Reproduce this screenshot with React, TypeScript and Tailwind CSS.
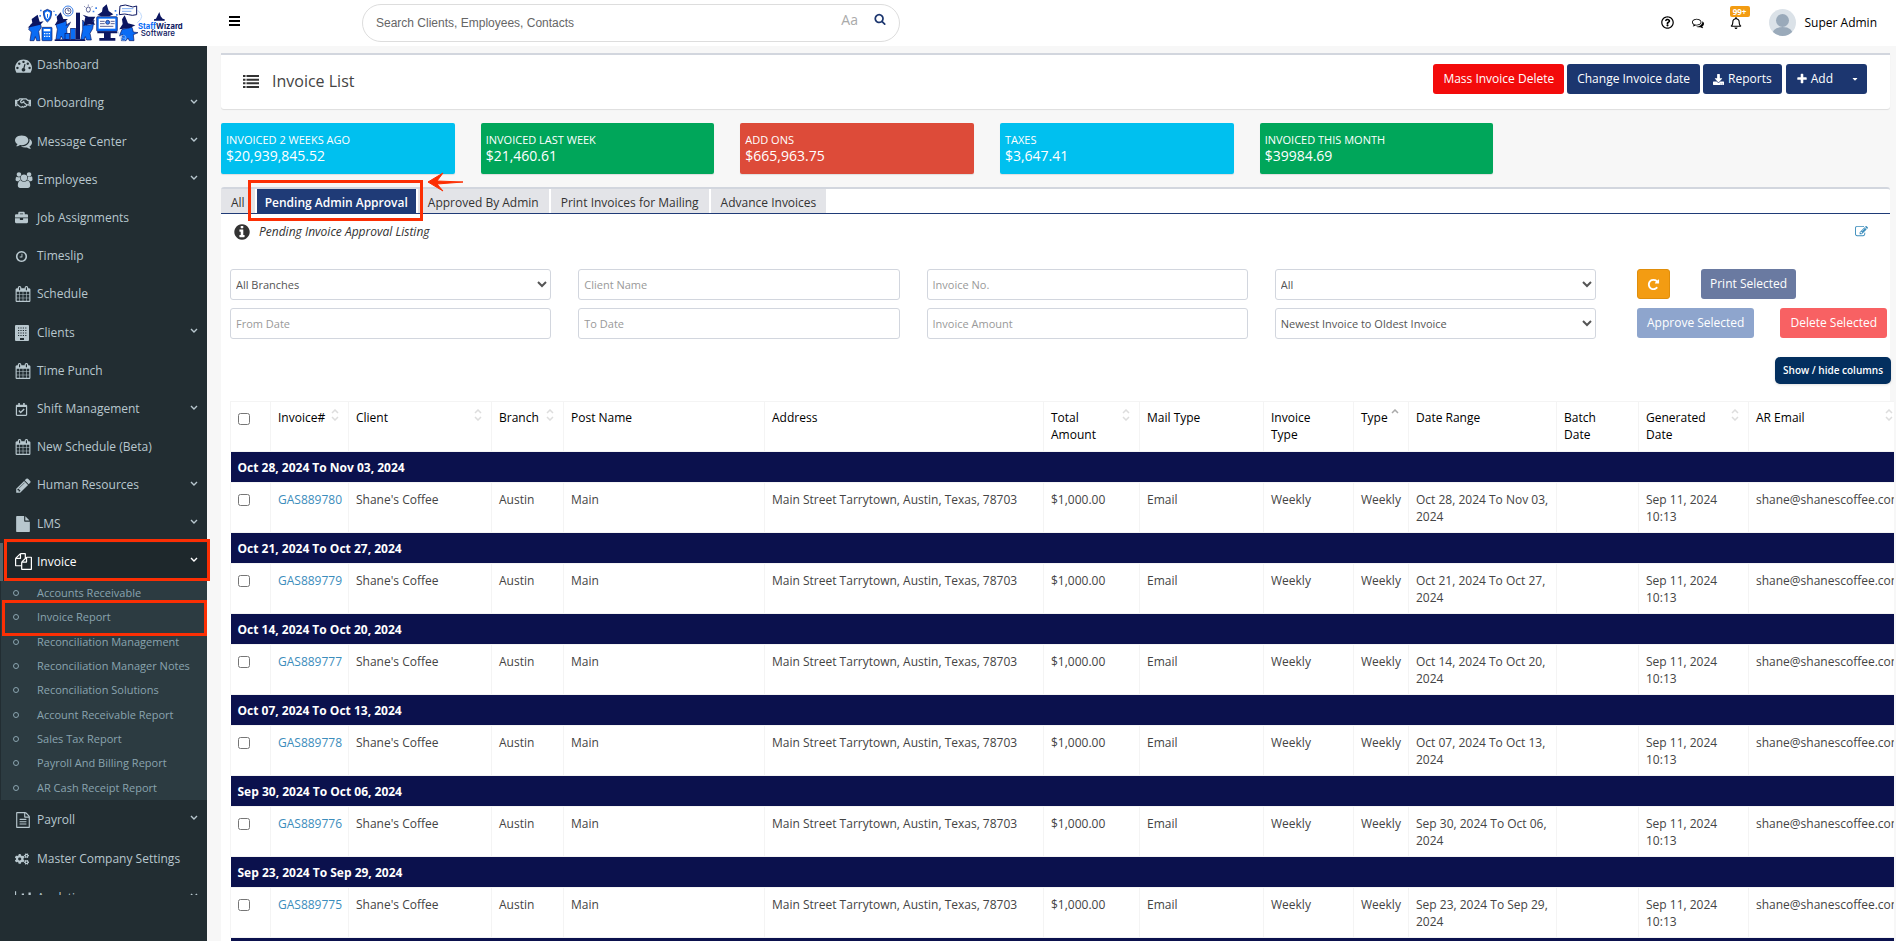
import type { ReactNode } from "react";
import {
  FaBriefcase,
  FaCaretDown,
  FaCogs,
  FaDownload,
  FaRegBell,
  FaRegCalendarCheck,
  FaRegHandshake,
  FaRegQuestionCircle,
} from "react-icons/fa";

const glyphs = {
  dashboard:
    "M384 1152q0-53-37.5-90.5t-90.5-37.5-90.5 37.5-37.5 90.5 37.5 90.5 90.5 37.5 90.5-37.5 37.5-90.5zm192-448q0-53-37.5-90.5t-90.5-37.5-90.5 37.5-37.5 90.5 37.5 90.5 90.5 37.5 90.5-37.5 37.5-90.5zm428 481l101-382q6-26-7.5-48.5t-38.5-29.5-48 6.5-30 39.5l-101 382q-60 5-107 43.5t-63 98.5q-20 77 20 146t117 89 146-20 89-117q16-60-6-117t-72-91zm660-33q0-53-37.5-90.5t-90.5-37.5-90.5 37.5-37.5 90.5 37.5 90.5 90.5 37.5 90.5-37.5 37.5-90.5zm-640-640q0-53-37.5-90.5t-90.5-37.5-90.5 37.5-37.5 90.5 37.5 90.5 90.5 37.5 90.5-37.5 37.5-90.5zm448 192q0-53-37.5-90.5t-90.5-37.5-90.5 37.5-37.5 90.5 37.5 90.5 90.5 37.5 90.5-37.5 37.5-90.5zm320 448q0 261-141 483-19 29-54 29h-1402q-35 0-54-29-141-221-141-483 0-182 71-348t191-286 286-191 348-71 348 71 286 191 191 286 71 348z",
  comments:
    "M1408 768q0 139-94 257t-256.5 186.5-353.5 68.5q-86 0-176-16-124 88-278 128-36 9-86 16h-3q-11 0-20.5-8t-11.5-21q-1-3-1-6.5t.5-6.5 2-6l2.5-5t3.5-5.5 4-5 4.5-5 4-4.5q5-6 23-25t26-29.5 22.5-29 25-38.5 20.5-44q-124-72-195-177t-71-224q0-139 94-257t256.5-186.5 353.5-68.5 353.5 68.5 256.5 186.5 94 257zm384 256q0 120-71 224.5t-195 176.5q10 24 20.5 44t25 38.5 22.5 29 26 29.5 23 25q1 1 4 4.5t4.5 5 4 5 3.5 5.5l2.5 5t2 6 .5 6.5-1 6.5q-3 14-13 22t-22 7q-50-7-86-16-154-40-278-128-90 16-176 16-271 0-472-132 58 4 88 4 161 0 309-45t264-129q125-92 192-212t67-254q0-77-23-152 129 71 204 178t75 230z",
  commentsOutline:
    "M704 384q-153 0-286 52t-211.5 141-78.5 191q0 82 53 158t149 132l97 56-35 84q34-20 62-39l44-31 53 10q78 14 153 14 153 0 286-52t211.5-141 78.5-191-78.5-191-211.5-141-286-52zm0-128q191 0 353.5 68.5t256.5 186.5 94 257-94 257-256.5 186.5-353.5 68.5q-86 0-176-16-124 88-278 128-36 9-86 16h-3q-11 0-20.5-8t-11.5-21q-1-3-1-6.5t.5-6.5 2-6l2.5-5t3.5-5.5 4-5 4.5-5 4-4.5q5-6 23-25t26-29.5 22.5-29 25-38.5 20.5-44q-124-72-195-177t-71-224q0-139 94-257t256.5-186.5 353.5-68.5zm822 1169q10 24 20.5 44t25 38.5 22.5 29 26 29.5 23 25q1 1 4 4.5t4.5 5 4 5 3.5 5.5l2.5 5t2 6 .5 6.5-1 6.5q-3 14-13 22t-22 7q-50-7-86-16-154-40-278-128-90 16-176 16-271 0-472-132 58 4 88 4 161 0 309-45t264-129q125-92 192-212t67-254q0-77-23-152 129 71 204 178t75 230q0 120-71 224.5t-195 176.5z",
  users:
    "M657 896q-162 5-265 128h-134q-82 0-138-40.5t-56-118.5q0-353 124-353 6 0 43.5 21t97.5 42.5 119 21.5q67 0 133-23-5 37-5 66 0 159 90 294zm1071 637q0 120-73 189.5t-194 69.5h-874q-121 0-194-69.5t-73-189.5q0-53 3.5-103.5t14-109 26.5-108.5 43-97.5 62-81 85.5-53.5 111.500-20q10 0 43 21.5t73 48 107 48 135 21.5 135-21.5 107-48 73-48 43-21.5q61 0 111.500 20t85.5 53.5 62 81 43 97.5 26.5 108.5 14 109 3.5 103.5zm-1024-1277q0 106-75 181t-181 75-181-75-75-181 75-181 181-75 181 75 75 181zm704 384q0 159-112.5 271.5t-271.5 112.5-271.5-112.5-112.5-271.5 112.5-271.5 271.5-112.5 271.5 112.5 112.5 271.5zm576 225q0 78-56 118.500t-138 40.5h-134q-103-123-265-128 90-135 90-294 0-29-5-66 66 23 133 23 59 0 119-21.5t97.5-42.5 43.5-21q124 0 124 353zm-128-609q0 106-75 181t-181 75-181-75-75-181 75-181 181-75 181 75 75 181z",
  clock:
    "M1024 544v448q0 14-9 23t-23 9h-320q-14 0-23-9t-9-23v-64q0-14 9-23t23-9h224v-352q0-14 9-23t23-9h64q14 0 23 9t9 23zm416 352q0-148-73-273t-198-198-273-73-273 73-198 198-73 273 73 273 198 198 273 73 273-73 198-198 73-273zm224 0q0 209-103 385.5t-279.5 279.5-385.5 103-385.5-103-279.5-279.5-103-385.5 103-385.5 279.5-279.5 385.5-103 385.5 103 279.5 279.5 103 385.5z",
  calendar:
    "M192 1664h288v-288h-288v288zm352 0h320v-288h-320v288zm-352-352h288v-320h-288v320zm352 0h320v-320h-320v320zm-352-384h288v-288h-288v288zm736 736h320v-288h-320v288zm-384-736h320v-288h-320v288zm768 736h288v-288h-288v288zm-384-352h320v-320h-320v320zm-352-864v-288q0-13-9.5-22.5t-22.5-9.5h-64q-13 0-22.5 9.5t-9.5 22.5v288q0 13 9.5 22.5t22.5 9.5h64q13 0 22.5-9.5t9.5-22.5zm736 864h288v-320h-288v320zm-384-384h320v-288h-320v288zm384 0h288v-288h-288v288zm32-480v-288q0-13-9.5-22.5t-22.5-9.5h-64q-13 0-22.5 9.5t-9.5 22.5v288q0 13 9.5 22.5t22.5 9.5h64q13 0 22.5-9.5t9.5-22.5zm384-64v1280q0 52-38 90t-90 38h-1408q-52 0-90-38t-38-90v-1280q0-52 38-90t90-38h128v-96q0-66 47-113t113-47h64q66 0 113 47t47 113v96h384v-96q0-66 47-113t113-47h64q66 0 113 47t47 113v96h128q52 0 90 38t38 90z",
  pencil:
    "M491 1536l91-91-235-235-91 91v107h128v128h107zm523-928q0-22-22-22-10 0-17 7l-542 542q-7 7-7 17 0 22 22 22 10 0 17-7l542-542q7-7 7-17zm-54-192l416 416-832 832h-416v-416zm683 96q0 53-37 90l-166 166-416-416 166-165q36-38 90-38 53 0 91 38l235 234q37 39 37 91z",
  file: "M1152 512v-472q22 14 36 28l408 408q14 14 28 36h-472zm-128 32q0 40 28 68t68 28h544v1056q0 40-28 68t-68 28h-1344q-40 0-68-28t-28-68v-1600q0-40 28-68t68-28h800v544z",
  files:
    "M1696 384q40 0 68 28t28 68v1216q0 40-28 68t-68 28h-960q-40 0-68-28t-28-68v-288h-544q-40 0-68-28t-28-68v-672q0-40 20-88t48-76l408-408q28-28 76-48t88-20h416q40 0 68 28t28 68v328q68-40 128-40h416zm-544 213l-299 299h299v-299zm-640-384l-299 299h299v-299zm196 647l316-316v-416h-384v416q0 40-28 68t-68 28h-416v640h512v-256q0-40 20-88t48-76zm956 804v-1152h-384v416q0 40-28 68t-68 28h-416v640h896z",
  fileText:
    "M1596 380q28 28 48 76t20 88v1152q0 40-28 68t-68 28h-1344q-40 0-68-28t-28-68v-1600q0-40 28-68t68-28h896q40 0 88 20t76 48zm-444-244v376h376q-10-29-22-41l-313-313q-12-12-41-22zm384 1528v-1024h-416q-40 0-68-28t-28-68v-416h-768v1536h1280zm-1024-864q0-14 9-23t23-9h704q14 0 23 9t9 23v64q0 14-9 23t-23 9h-704q-14 0-23-9t-9-23v-64zm736 224q14 0 23 9t9 23v64q0 14-9 23t-23 9h-704q-14 0-23-9t-9-23v-64q0-14 9-23t23-9h704zm0 256q14 0 23 9t9 23v64q0 14-9 23t-23 9h-704q-14 0-23-9t-9-23v-64q0-14 9-23t23-9h704z",
  chart:
    "M640 896v512h-256v-512h256zm384-512v1024h-256v-1024h256zm1024 1152v128h-2048v-1536h128v1408h1920zm-640-896v768h-256v-768h256zm384-384v1152h-256v-1152h256z",
  search:
    "M1216 832q0-185-131.5-316.5t-316.5-131.5-316.5 131.5-131.5 316.5 131.5 316.5 316.5 131.5 316.5-131.5 131.5-316.5zm512 832q0 52-38 90t-90 38q-54 0-90-38l-343-342q-179 124-399 124-143 0-273.5-55.5t-225-150-150-225-55.5-273.5 55.5-273.5 150-225 225-150 273.5-55.5 273.5 55.5 225 150 150 225 55.5 273.5q0 220-124 399l343 343q37 37 37 90z",
  info: "M1152 1376v-160q0-14-9-23t-23-9h-96v-512q0-14-9-23t-23-9h-320q-14 0-23 9t-9 23v160q0 14 9 23t23 9h96v320h-96q-14 0-23 9t-9 23v160q0 14 9 23t23 9h448q14 0 23-9t9-23zm-128-896v-160q0-14-9-23t-23-9h-192q-14 0-23 9t-9 23v160q0 14 9 23t23 9h192q14 0 23-9t9-23zm640 416q0 209-103 385.5t-279.5 279.5-385.5 103-385.5-103-279.5-279.5-103-385.5 103-385.5 279.5-279.5 385.5-103 385.5 103 279.5 279.5 103 385.5z",
  edit: "M888 1184l116-116-152-152-116 116v56h96v96h56zm440-720q-16-16-33 1l-350 350q-17 17-1 33t33-1l350-350q17-17 1-33zm80 594v190q0 119-84.5 203.5t-203.5 84.5h-832q-119 0-203.5-84.5t-84.5-203.5v-832q0-119 84.5-203.5t203.5-84.5h832q63 0 117 25 15 7 18 23 3 17-9 29l-49 49q-14 14-32 8-23-6-45-6h-832q-66 0-113 47t-47 113v832q0 66 47 113t113 47h832q66 0 113-47t47-113v-126q0-13 9-22l64-64q15-15 35-7t20 29zm-96-738l288 288-672 672h-288v-288zm444 132l-92 92-288-288 92-92q28-28 68-28t68 28l152 152q28 28 28 68t-28 68z",
  reload:
    "M1664 256v448q0 26-19 45t-45 19h-448q-42 0-59-40-17-39 14-69l138-138q-148-137-349-137-104 0-198.5 40.5t-163.5 109.5-109.5 163.5-40.5 198.5 40.5 198.5 109.5 163.5 163.5 109.5 198.5 40.5q119 0 225-52t179-147q7-10 23-12 15 0 25 9l137 138q9 8 9.5 20.5t-7.5 22.5q-109 132-264 204.5t-327 72.5q-156 0-298-61t-245-164-164-245-61-298 61-298 164-245 245-164 298-61q147 0 284.5 55.5t244.5 156.5l130-129q29-31 70-14 39 17 39 59z",
  plus: "M1600 736v192q0 40-28 68t-68 28h-416v416q0 40-28 68t-68 28h-192q-40 0-68-28t-28-68v-416h-416q-40 0-68-28t-28-68v-192q0-40 28-68t68-28h416v-416q0-40 28-68t68-28h192q40 0 68 28t28 68v416h416q40 0 68 28t28 68z",
};

type GlyphProps = { name: keyof typeof glyphs; size?: number; wide?: boolean };

// wide glyphs are drawn on a 2048 unit grid instead of 1792
function Glyph({ name, size = 16, wide }: GlyphProps) {
  return (
    <svg
      viewBox={wide ? "0 0 2048 1792" : "0 0 1792 1792"}
      width={size}
      height={wide ? size - 2 : size}
      fill="currentColor"
      aria-hidden="true"
    >
      <path d={glyphs[name]} />
    </svg>
  );
}

function BuildingIcon() {
  return (
    <svg viewBox="0 0 14 16" width={14} height={16} aria-hidden="true">
      <rect width="14" height="16" rx="1" fill="currentColor" />
      <path d="M3 3h9M3 5.500h9M3 8h9M3 10.500h9" stroke="#222d32" strokeWidth="1.200" strokeDasharray="1.200 1.200" />
      <rect x="5" y="13" width="4" height="2" fill="#222d32" />
    </svg>
  );
}

type NavItem = { label: string; icon: ReactNode; expandable?: boolean; active?: boolean };

const mainNav: NavItem[] = [
  { label: "Dashboard", icon: <Glyph name="dashboard" size={17} /> },
  { label: "Onboarding", icon: <FaRegHandshake size={16} />, expandable: true },
  { label: "Message Center", icon: <Glyph name="comments" size={17} />, expandable: true },
  { label: "Employees", icon: <Glyph name="users" size={18} wide />, expandable: true },
  { label: "Job Assignments", icon: <FaBriefcase size={13} /> },
  { label: "Timeslip", icon: <Glyph name="clock" size={13} /> },
  { label: "Schedule", icon: <Glyph name="calendar" size={16} /> },
  { label: "Clients", icon: <BuildingIcon />, expandable: true },
  { label: "Time Punch", icon: <Glyph name="calendar" size={16} /> },
  { label: "Shift Management", icon: <FaRegCalendarCheck size={13} />, expandable: true },
  { label: "New Schedule (Beta)", icon: <Glyph name="calendar" size={16} /> },
  { label: "Human Resources", icon: <Glyph name="pencil" size={17} />, expandable: true },
  { label: "LMS", icon: <Glyph name="file" size={16} />, expandable: true },
  { label: "Invoice", icon: <Glyph name="files" size={17} />, expandable: true, active: true },
];

const invoiceNav = [
  "Accounts Receivable",
  "Invoice Report",
  "Reconciliation Management",
  "Reconciliation Manager Notes",
  "Reconciliation Solutions",
  "Account Receivable Report",
  "Sales Tax Report",
  "Payroll And Billing Report",
  "AR Cash Receipt Report",
];

const lowerNav: NavItem[] = [
  { label: "Payroll", icon: <Glyph name="fileText" size={16} />, expandable: true },
  { label: "Master Company Settings", icon: <FaCogs size={14} /> },
  { label: "Analytics", icon: <Glyph name="chart" size={18} wide />, expandable: true },
];

const stats = [
  { label: "INVOICED 2 WEEKS AGO", value: "$20,939,845.52", color: "bg-[#00c0ef]" },
  { label: "INVOICED LAST WEEK", value: "$21,460.61", color: "bg-[#00a65a]" },
  { label: "ADD ONS", value: "$665,963.75", color: "bg-[#dd4b39]" },
  { label: "TAXES", value: "$3,647.41", color: "bg-[#00c0ef]" },
  { label: "INVOICED THIS MONTH", value: "$39984.69", color: "bg-[#00a65a]" },
];

const tabs = ["All", "Pending Admin Approval", "Approved By Admin", "Print Invoices for Mailing", "Advance Invoices"];

const columns = [
  { label: "Invoice#", width: "w-[78px]", sort: true },
  { label: "Client", width: "w-[143px]", sort: true },
  { label: "Branch", width: "w-[72px]", sort: true },
  { label: "Post Name", width: "w-[201px]" },
  { label: "Address", width: "w-[279px]" },
  { label: "Total Amount", width: "w-[96px]", sort: true, wrap: true },
  { label: "Mail Type", width: "w-[124px]" },
  { label: "Invoice Type", width: "w-[90px]", wrap: true },
  { label: "Type", width: "w-[55px]", sort: true, sorted: true },
  { label: "Date Range", width: "w-[148px]" },
  { label: "Batch Date", width: "w-[82px]", wrap: true },
  { label: "Generated Date", width: "w-[110px]", sort: true, wrap: true },
  { label: "AR Email", width: "w-[154px]", sort: true },
];

const invoices = [
  { id: "GAS889780", range: "Oct 28, 2024 To Nov 03, 2024" },
  { id: "GAS889779", range: "Oct 21, 2024 To Oct 27, 2024" },
  { id: "GAS889777", range: "Oct 14, 2024 To Oct 20, 2024" },
  { id: "GAS889778", range: "Oct 07, 2024 To Oct 13, 2024" },
  { id: "GAS889776", range: "Sep 30, 2024 To Oct 06, 2024" },
  { id: "GAS889775", range: "Sep 23, 2024 To Sep 29, 2024" },
  { id: "GAS889774", range: "Sep 16, 2024 To Sep 22, 2024" },
];

function Logo() {
  return (
    <svg viewBox="0 0 510 138" className="h-[46px] w-[170px]" role="img" aria-label="StaffWizard Software">
      <g fill="#0a6cf5" stroke="#0b1560" strokeWidth="2">
        <path d="M34 72l26-6 4 16-8 12 4 28H50l-4-12-4 12H30l4-26-8-8z" />
        <path d="M112 68l26-6 2 14 10-6-10 16 2 32h-14l-4-10-4 10h-12l4-30-4-14z" />
        <path d="M188 60l10 16 16-2 8-14-4 26-8 14 4 20h-14l-4-10-4 10h-10l6-32z" />
        <path d="M306 88l30-6 4 14 14 2-14 6 2 18h-14l-4-8-6 8h-14l4-18-10 4z" />
        <path d="M70 34l12-6 13 6q0 24-13 32-12-8-12-32z" />
        <rect x="66" y="82" width="30" height="40" rx="2" />
        <rect x="135" y="100" width="14" height="18" />
        <rect x="152" y="85" width="14" height="33" />
        <rect x="230" y="50" width="62" height="44" rx="3" />
      </g>
      <g fill="#fff">
        <path d="M75 38l7-4 8 4q0 14-8 20-7-6-7-20z" />
        <rect x="71" y="87" width="20" height="7" />
        <path d="M72 99h4v4h-4zm7 0h4v4h-4zm7 0h4v4h-4zm-14 8h4v4h-4zm7 0h4v4h-4zm7 0h4v4h-4z" />
        <rect x="236" y="56" width="50" height="30" />
      </g>
      <path d="M81 42h3v11h-3z" fill="#0a6cf5" />
      <g fill="#0b1560">
        <path d="M53 44l6 22 12-2-10 10-38 9 14-14-2-12z" />
        <path d="M122 37l8 20 14 0-12 10-28 9 8-14-2-12z" />
        <path d="M190 78l6-26-8-8 18 6 20 0-8 14 8 10-16-2z" />
        <path d="M260 13l6 20 14 10-12 6h-24l-12-4 14-10 2-12z" />
        <path d="M314 46l10 24 22 6-16 8-32 4 10-16-2-14z" />
        <path d="M168 38h12v80h-12z" />
        <path d="M104 118h92v5h-92z" />
        <path d="M232 94h60v6h-60zM252 100h20v14h-20zM238 114h48v8h-48z" />
        <path d="M418 36l4 13 6 7 6 2v4h-32v-4l6-2 4-8z" />
      </g>
      <g fill="none" stroke="#0b1560" strokeWidth="2">
        <circle cx="144" cy="33" r="15" stroke="#3d82ea" strokeWidth="3" />
        <circle cx="144" cy="33" r="9" />
        <path d="M144 27v6h5M137 76l16-10" />
        <path d="M300 18q18-6 28 0t22 0v26q-14 4-24 0t-28 0z" strokeWidth="3" />
        <path d="M306 26h34M306 34h28" stroke="#3d82ea" />
        <path d="M199 28q0-7 6-7t6 7q0 4-3 8h-6q-3-4-3-8zM205 14v3M193 19l3 3M217 19l-3 3" />
        <path d="M240 64h14M240 71h14M240 79h40M272 64h12M272 71h12" />
        <circle cx="263" cy="67" r="6" fill="#3d82ea" />
        <path d="M352 30q26 20 0 38M294 94q8 26 24 20" stroke="#9cc3f8" />
        <circle cx="310" cy="114" r="8" stroke="#9cc3f8" />
      </g>
      <path
        d="M60 29h5v5h-5zM58 45h5v5h-5zM105 42h5v5h-5zM100 32h4v4h-4zM218 32h5v5h-5zM226 22h5v5h-5zM284 30h5v5h-5zM288 42h5v5h-5z"
        fill="#3d82ea"
      />
      <g fontFamily="Inter, 'Open Sans', sans-serif" fontWeight="700">
        <text x="354" y="88" fontSize="23" fill="#0b1560">
          <tspan fill="#0a6cf5">Staff</tspan>Wizard
        </text>
        <text x="362" y="108" fontSize="24" fontWeight="500" fill="#0b1560">
          Software
        </text>
      </g>
    </svg>
  );
}

function AngleDown() {
  return (
    <svg viewBox="0 0 8 5" className="mb-1 h-[5px] w-2" fill="none" stroke="currentColor" strokeWidth="1.400" aria-hidden="true">
      <path d="M1 1l3 3 3-3" />
    </svg>
  );
}

function NavLink({ item }: { item: NavItem }) {
  return (
    <li className={item.active ? "border-l-3 border-[#59656a] bg-[#1e282c] text-white" : "border-l-3 border-transparent"}>
      <a href="#" className="flex h-full items-center pr-[9px] pl-3">
        <span className="flex w-[22px] items-center">{item.icon}</span>
        <span className="flex-1">{item.label}</span>
        {item.expandable && <AngleDown />}
      </a>
    </li>
  );
}

function Sidebar() {
  return (
    <aside className="relative w-[207px] shrink-0 bg-[#222d32] text-[12px] text-[#b8c7ce]">
      <nav className="h-[849px] overflow-hidden">
        <ul className="grid h-[535px] auto-rows-fr">
          {mainNav.map((item) => (
            <NavLink key={item.label} item={item} />
          ))}
        </ul>
        <ul className="ml-px grid h-[219px] auto-rows-fr bg-[#2c3b41] text-[11px] text-[#8aa4af]">
          {invoiceNav.map((label) => (
            <li key={label}>
              <a href="#" className="flex h-full items-center pl-3">
                <span className="mr-[18px] size-[6px] rounded-full border border-current" />
                {label}
              </a>
            </li>
          ))}
        </ul>
        <ul className="grid h-[117px] auto-rows-fr">
          {lowerNav.map((item) => (
            <NavLink key={item.label} item={item} />
          ))}
        </ul>
      </nav>
      {/* walkthrough highlights */}
      <div className="absolute top-[493px] left-1 h-[42px] w-[206px] border-3 border-[#fc2f04]" />
      <div className="absolute top-[554px] left-[2px] h-9 w-[205px] border-3 border-[#fc2f04]" />
    </aside>
  );
}

function TopBar() {
  return (
    <header className="flex h-[46px] items-center bg-white">
      <a href="#" className="flex w-[207px] justify-center pl-[3px]">
        <Logo />
      </a>
      <button type="button" aria-label="Toggle navigation" className="-mt-1 ml-[22px] flex w-[11px] flex-col gap-[2px]">
        <span className="h-[2px] bg-black" />
        <span className="h-[2px] bg-black" />
        <span className="h-[2px] bg-black" />
      </button>
      <form className="ml-[122px] flex h-[38px] w-[538px] items-center rounded-full border border-[#ddd] px-[13px]">
        <input
          type="search"
          aria-label="Search"
          placeholder="Search Clients, Employees, Contacts"
          className="min-w-0 flex-1 font-['Liberation_Sans',Arial,sans-serif] text-[12px] text-[#555] outline-none placeholder:text-[#666]"
        />
        <span className="mr-4 mb-2 text-[14px] text-[#aaa]">Aa</span>
        <button type="button" aria-label="Run search" className="mb-2 text-[#1c366f]">
          <Glyph name="search" size={12} />
        </button>
      </form>
      <div className="ml-auto flex items-center pr-[19px]">
        <button type="button" aria-label="Help" className="mr-[18px] mb-[2px]">
          <FaRegQuestionCircle size={13} />
        </button>
        <button type="button" aria-label="Messages" className="mr-[26px]">
          <Glyph name="commentsOutline" size={12} />
        </button>
        <button type="button" aria-label="Notifications" className="relative mr-[27px]">
          <FaRegBell size={12} />
          <span className="absolute -top-[11px] left-0 flex h-[11px] w-5 items-center justify-center rounded-[2px] bg-[#f39c12] text-[8px] font-bold text-white">
            99+
          </span>
        </button>
        <svg viewBox="0 0 27 27" className="mr-[9px] mb-[2px] size-[27px]" role="img" aria-label="Avatar">
          <clipPath id="avatar">
            <circle cx="13.5" cy="13.5" r="13.5" />
          </clipPath>
          <g clipPath="url(#avatar)">
            <rect width="27" height="27" fill="#dbe2e8" />
            <circle cx="13.5" cy="11.5" r="6.5" fill="#9aaaba" />
            <path d="M3 27q0-9 10.500-9t10.500 9z" fill="#9aaaba" />
          </g>
        </svg>
        <span className="text-[12px] text-black">Super Admin</span>
      </div>
    </header>
  );
}

function TitleBox() {
  return (
    <section className="flex items-start justify-between rounded-b-[3px] border-t-2 border-[#d2d6de] bg-white pt-[9px] pr-[23px] pb-[15px] pl-[22px] shadow-[0_1px_1px_rgba(0,0,0,0.1)]">
      <h1 className="mt-[5px] flex items-center gap-[13px] text-[16px] text-[#444]">
        <svg viewBox="0 0 16 13" className="h-[13px] w-4" fill="#333" aria-hidden="true">
          <path d="M0 0h2.500v2H0zM0 3.700h2.500v2H0zM0 7.300h2.500v2H0zM0 11h2.500v2H0zM3.500 0H16v2H3.500zM3.500 3.700H16v2H3.500zM3.500 7.300H16v2H3.500zM3.500 11H16v2H3.500z" />
        </svg>
        Invoice List
      </h1>
      <div className="flex gap-[3px] text-[12px] text-white">
        <button type="button" className="h-[30px] rounded-[3px] bg-[#f30b0b] px-[10px]">
          Mass Invoice Delete
        </button>
        <button type="button" className="h-[30px] rounded-[3px] bg-[#1c366f] px-[10px]">
          Change Invoice date
        </button>
        <button type="button" className="flex h-[30px] items-center gap-1 rounded-[3px] bg-[#1c366f] px-[10px]">
          <FaDownload size={11} />
          Reports
        </button>
        <div className="ml-px flex h-[30px] rounded-[3px] bg-[#1c366f]">
          <button type="button" className="flex items-center gap-[3px] px-[10px]">
            <Glyph name="plus" size={12} />
            Add
          </button>
          <button type="button" aria-label="More add options" className="px-2">
            <FaCaretDown size={8} />
          </button>
        </div>
      </div>
    </section>
  );
}

function TabBar() {
  return (
    <div role="tablist" className="relative flex h-[25px] gap-[2px] border-b border-[#1f3b77] text-[12px] text-[#333]">
      {tabs.map((tab) => {
        const active = tab === "Pending Admin Approval";
        return (
          <button
            key={tab}
            type="button"
            role="tab"
            aria-selected={active}
            className={
              active ? "bg-[#1f3b77] px-2 pt-[3px] font-semibold text-white" : "bg-[#e3e4e8] px-[10px] pt-[3px]"
            }
          >
            {tab}
          </button>
        );
      })}
      {/* walkthrough highlight and pointer over the active tab */}
      <div className="absolute -top-[9px] left-[27px] h-[41px] w-[175px] border-3 border-[#fc2f04]" />
      <svg viewBox="0 0 36 20" className="absolute -top-[17px] left-[206px] h-5 w-9" aria-hidden="true">
        <path d="M1 10L16 1l-6 8 26 1-26 2 6 7z" fill="#fc2f04" stroke="#fc2f04" />
      </svg>
    </div>
  );
}

const fieldClass = "h-[31px] w-full min-w-0 rounded-[3px] border border-[#d2d6de] bg-white text-[#555]";

function Filters() {
  return (
    <form className="flex pl-[9px] text-[11px]">
      <div className="grid flex-1 grid-cols-4 gap-x-[27px] gap-y-2">
        <select aria-label="Branch" className={`${fieldClass} px-px`}>
          <option>All Branches</option>
        </select>
        <input aria-label="Client name" placeholder="Client Name" className={`${fieldClass} px-[5px] placeholder:text-[#999]`} />
        <input aria-label="Invoice number" placeholder="Invoice No." className={`${fieldClass} px-[5px] placeholder:text-[#999]`} />
        <select aria-label="Status" className={`${fieldClass} px-px`}>
          <option>All</option>
        </select>
        <input aria-label="From date" placeholder="From Date" className={`${fieldClass} px-[5px] placeholder:text-[#999]`} />
        <input aria-label="To date" placeholder="To Date" className={`${fieldClass} px-[5px] placeholder:text-[#999]`} />
        <input aria-label="Invoice amount" placeholder="Invoice Amount" className={`${fieldClass} px-[5px] placeholder:text-[#999]`} />
        <select aria-label="Sort order" className={`${fieldClass} px-px`}>
          <option>Newest Invoice to Oldest Invoice</option>
        </select>
      </div>
      <div className="ml-[41px] flex w-[253px] flex-col gap-[9px] text-[12px] text-white">
        <div className="flex gap-[31px]">
          <button
            type="button"
            aria-label="Reset filters"
            className="flex h-[30px] w-[33px] items-center justify-center rounded-[3px] border border-[#e08e0b] bg-[#f39c12]"
          >
            <Glyph name="reload" size={13} />
          </button>
          <button type="button" className="h-[30px] rounded-[3px] bg-[#6a7aa1] px-[9px]">
            Print Selected
          </button>
        </div>
        <div className="flex justify-between pr-[3px]">
          <button type="button" className="h-[30px] rounded-[3px] bg-[#8ea5cd] px-[10px]">
            Approve Selected
          </button>
          <button type="button" className="h-[30px] rounded-[3px] bg-[#f86163] px-[10px]">
            Delete Selected
          </button>
        </div>
      </div>
    </form>
  );
}

function SortIcon({ sorted }: { sorted?: boolean }) {
  return (
    <svg viewBox="0 0 8 12" className="absolute top-[7px] right-[9px] h-3 w-2" fill="none" stroke="#ddd" strokeWidth="1.500" aria-hidden="true">
      <path d="M1 4l3-3 3 3" stroke={sorted ? "#aaa" : "#ddd"} />
      {!sorted && <path d="M1 8l3 3 3-3" />}
    </svg>
  );
}

function InvoiceTable() {
  return (
    <div className="-mr-1 ml-[9px] overflow-hidden">
      <table className="w-[1672px] min-w-full table-fixed border-collapse bg-white text-left text-[12px] leading-[17px] text-[#444]">
        <thead className="text-black">
          <tr className="h-[50px] align-top">
            <th className="w-10 border border-[#f4f4f4] px-[7px] pt-[11px]">
              <input type="checkbox" aria-label="Select all invoices" className="block size-3" />
            </th>
            {columns.map((column) => (
              <th key={column.label} className={`${column.width} relative border border-[#f4f4f4] px-[7px] pt-[7px] font-normal`}>
                <span className={column.wrap ? "block w-min" : ""}>{column.label}</span>
                {column.sort && <SortIcon sorted={column.sorted} />}
              </th>
            ))}
          </tr>
        </thead>
        {invoices.map((invoice) => (
          <tbody key={invoice.id}>
            <tr className="h-[31px] bg-[#0b114d] text-white">
              <th colSpan={14} scope="rowgroup" className="px-[7px] font-bold">
                {invoice.range}
              </th>
            </tr>
            <tr className="h-[50px] align-top [&>td]:border [&>td]:border-[#f4f4f4] [&>td]:pt-2 [&>td]:pb-[6px] [&>td]:pl-[7px]">
              <td>
                <input type="checkbox" aria-label={`Select ${invoice.id}`} className="mt-[3px] block size-3" />
              </td>
              <td>
                <a href="#" className="text-[#3c8dbc]">
                  {invoice.id}
                </a>
              </td>
              <td>Shane's Coffee</td>
              <td>Austin</td>
              <td>Main</td>
              <td>Main Street Tarrytown, Austin, Texas, 78703</td>
              <td>$1,000.00</td>
              <td>Email</td>
              <td>Weekly</td>
              <td>Weekly</td>
              <td>{invoice.range}</td>
              <td />
              <td>
                Sep 11, 2024
                <br />
                10:13
              </td>
              <td>shane@shanescoffee.com</td>
            </tr>
          </tbody>
        ))}
      </table>
    </div>
  );
}

export default function App() {
  return (
    <div className="flex h-screen flex-col overflow-hidden bg-[#f7f7f7] font-['Open_Sans',sans-serif]">
      <TopBar />
      <div className="flex min-h-0 flex-1">
        <Sidebar />
        <main className="flex min-w-0 flex-1 flex-col pt-[7px] pr-[6px] pl-[14px]">
          <TitleBox />
          <section className="mt-[14px] flex gap-[26px] text-white">
            {stats.map((stat) => (
              <div key={stat.label} className={`${stat.color} h-[51px] w-[14%] rounded-[2px] px-[5px] pt-2 shadow-[0_1px_1px_rgba(0,0,0,0.1)]`}>
                <p className="text-[11px] leading-[17px]">{stat.label}</p>
                <p className="text-[14px] leading-[15px]">{stat.value}</p>
              </div>
            ))}
          </section>
          <section className="mt-[13px] flex-1 rounded-t-[3px] border-t-2 border-[#d2d6de] bg-white">
            <TabBar />
            <div className="flex h-[35px] items-center pr-[22px] pl-3 text-[#333]">
              <Glyph name="info" size={18} />
              <p className="ml-2 flex-1 text-[12px] italic">Pending Invoice Approval Listing</p>
              <a href="#" aria-label="Edit listing" className="text-[#3c8dbc]">
                <Glyph name="edit" size={13} />
              </a>
            </div>
            <div className="pt-5">
              <Filters />
              <div className="mt-[18px] -mr-px mb-[17px] flex justify-end">
                <button type="button" className="h-[27px] rounded-[5px] bg-[#032f5f] px-2 text-[10px] font-semibold text-white shadow">
                  Show / hide columns
                </button>
              </div>
              <InvoiceTable />
            </div>
          </section>
        </main>
      </div>
    </div>
  );
}
